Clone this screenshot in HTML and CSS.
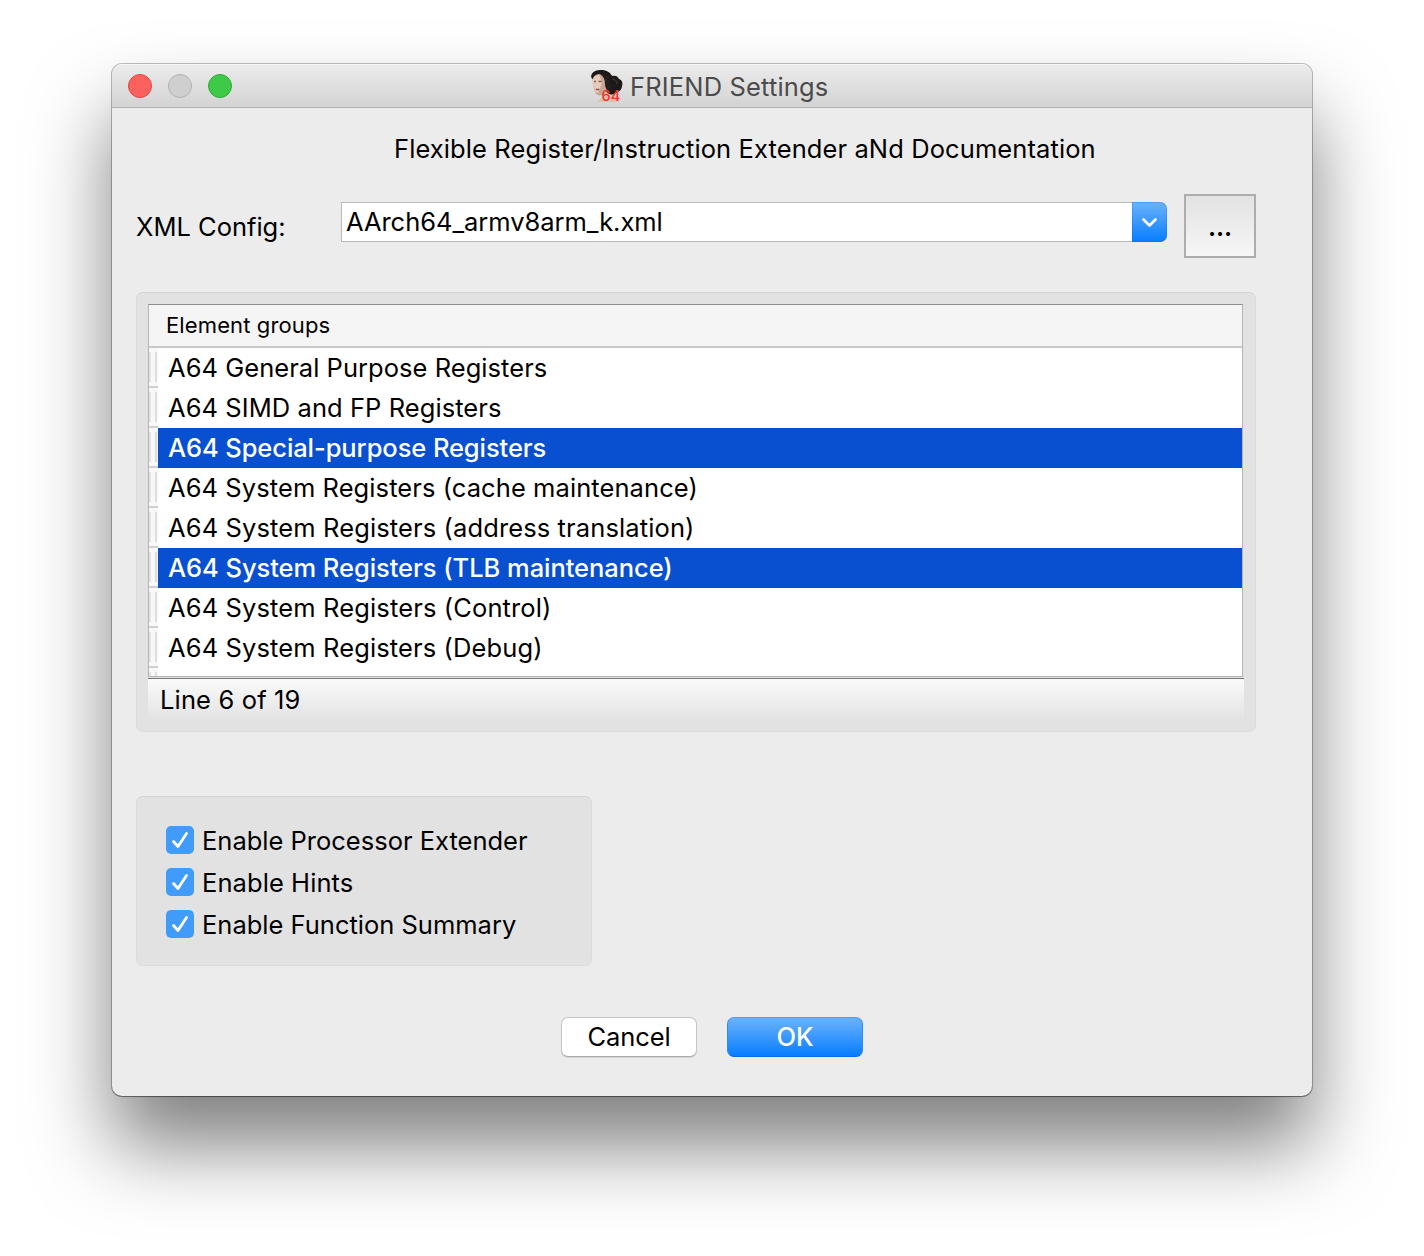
FILE: index.html
```html
<!DOCTYPE html>
<html lang="en">
<head>
<meta charset="utf-8">
<title>FRIEND Settings</title>
<link rel="stylesheet" href="styles.css">
</head>
<body>
<main class="window">
  <header class="titlebar">
    <div class="lights"><i class="light close"></i><i class="light minimize"></i><i class="light zoom"></i></div>
    <svg class="app-icon" viewBox="0 0 34 34" width="34" height="34">
      <path d="M8 33c1-2 4-3 5-5l-1-7 9-3c1 4 3 6 8 8l1 7z" fill="#dcbfae"/>
      <path d="M2.500 9C1 5 5 1 11 1c6-.5 10 2 12 6 3-1 6 0 7 3 3 1 4 4 3 7 0 3-2 5-4 6l-4 2c-3 1-6 0-8-3z" fill="#1d1918"/>
      <path d="M4 10c1-4 4-5 7-5 3 2 5 5 6 9l1 7-5 5c-3 1-6 0-7-3l-1-4c-1-3-2-6-1-9z" fill="#c9a593"/>
      <path d="M4 10c1-3 3-4 6-4 2 3 3 7 2 11l-3 7c-2 0-3-1-3-3l-1-3c-1-3-2-5-1-8z" fill="#e6cabc"/>
      <path d="M11 4c4 3 5 7 5 11 0 3 1 5 3 7l3-4-3-11z" fill="#241e1c"/>
      <path d="M5 12.500h2M9.500 12.500l3-.2M6.800 20.500h3.500" stroke="#80594c" stroke-width="1.300" fill="none"/>
      <path d="M23 10c3 0 5 2 5 5" stroke="#463a36" fill="none"/>
      <text x="12.500" y="32" class="icon-number">64</text>
    </svg>
    <h1 class="title">FRIEND Settings</h1>
  </header>
  <div class="content">
    <h2 class="heading">Flexible Register/Instruction Extender aNd Documentation</h2>
    <div class="config">
      <label class="config-label">XML Config:</label>
      <div class="combo"><span class="combo-value">AArch64_armv8arm_k.xml</span>
        <span class="combo-arrow"><svg width="35" height="40" viewBox="0 0 35 40"><path d="M11.500 17.500l6 6 6-6" fill="none" stroke="#fff" stroke-width="2.600" stroke-linecap="round" stroke-linejoin="round"/></svg></span>
      </div>
      <button class="browse">...</button>
    </div>
    <section class="panel groups">
      <div class="list">
        <div class="list-header">Element groups</div>
        <ul class="rows">
          <li class="row"><span class="r1">A64 General Purpose Registers</span></li>
          <li class="row"><span class="r2">A64 SIMD and FP Registers</span></li>
          <li class="row selected"><span class="r3">A64 Special-purpose Registers</span></li>
          <li class="row"><span class="r4">A64 System Registers (cache maintenance)</span></li>
          <li class="row"><span class="r5">A64 System Registers (address translation)</span></li>
          <li class="row selected"><span class="r6">A64 System Registers (TLB maintenance)</span></li>
          <li class="row"><span class="r7">A64 System Registers (Control)</span></li>
          <li class="row"><span class="r8">A64 System Registers (Debug)</span></li>
          <li class="row"></li>
        </ul>
      </div>
      <div class="status"><span>Line 6 of 19</span></div>
    </section>
    <section class="panel options">
      <div class="option"><svg class="check" viewBox="0 0 28 28"><path d="M7.500 15.500l4.500 5L20.500 7.500"/></svg><span class="o1">Enable Processor Extender</span></div>
      <div class="option"><svg class="check" viewBox="0 0 28 28"><path d="M7.500 15.500l4.500 5L20.500 7.500"/></svg><span class="o2">Enable Hints</span></div>
      <div class="option"><svg class="check" viewBox="0 0 28 28"><path d="M7.500 15.500l4.500 5L20.500 7.500"/></svg><span class="o3">Enable Function Summary</span></div>
    </section>
    <footer class="actions"><button class="button cancel">Cancel</button><button class="button primary">OK</button></footer>
  </div>
</main>
</body>
</html>
```
FILE: styles.css
```css
* { box-sizing: border-box; }
body { margin: 0; height: 1256px; overflow: hidden; padding: 64px 112px; background: #fff; font: 25.500px/40px Inter, "Liberation Sans", sans-serif; color: #000; }
h1, h2, ul { margin: 0; padding: 0; font: inherit; }
button { font: inherit; color: inherit; padding: 0; }
.window { width: 1200px; height: 1032px; background: #ececec; border-radius: 10px; overflow: hidden; white-space: nowrap; box-shadow: 0 0 0 1px rgba(0,0,0,.25), 0 1px 1px rgba(0,0,0,.3), 0 50px 80px rgba(0,0,0,.5); }
.titlebar { height: 44px; display: flex; border-bottom: 1px solid #b1b1b1; background: linear-gradient(#ececec, #d3d3d3); box-shadow: inset 0 1px #f6f6f6; }
.lights { display: flex; gap: 16px; padding: 10px 0 0 16px; width: 477px; }
.light { width: 24px; height: 24px; border-radius: 50%; border: 1px solid; }
.close { background: #fc625d; border-color: #e2443f; }
.minimize { background: #cfcfcf; border-color: #b1b1b1; }
.zoom { background: #3fc949; border-color: #2dac35; }
.app-icon { margin-top: 5px; flex: none; }
.icon-number { font: 500 14.500px Inter, sans-serif; fill: #ed3824; }
.title { margin-left: 7px; padding-top: 3px; color: #4b4b4b; letter-spacing: .16px; }
.content { padding: 21px 56px 0 24px; }
.heading { padding-left: 258px; height: 65px; letter-spacing: .1px; }
.config { display: flex; height: 64px; }
.config-label { width: 205px; padding-top: 13px; }
.combo { margin-top: 8px; width: 826px; height: 40px; display: flex; border: 1px solid #b9b9b9; border-right: 0; background: #fff; border-radius: 0 7px 7px 0; }
.combo-value { flex: 1; padding-left: 4px; line-height: 38px; letter-spacing: -.04px; }
.combo-arrow { width: 35px; height: 40px; margin-top: -1px; border-radius: 0 7px 7px 0; background: linear-gradient(#6cb3fa, #077dff); box-shadow: inset 0 0 0 1px rgba(0,100,240,.25); }
.combo-arrow svg { display: block; }
.browse { margin-left: 17px; width: 72px; height: 64px; border: 2px solid #adadad; background: linear-gradient(#e2e2e2, #f6f6f6); padding-top: 2px; font-weight: 600; letter-spacing: -.2px; }
.panel { background: #e2e2e2; border: 1px solid #dcdcdc; border-top-color: #d2d2d2; border-radius: 7px; }
.groups { margin-top: 34px; height: 440px; padding: 11px; }
.list { width: 1095px; height: 373px; border: 1px solid #b4b4b4; border-top-color: #8e8e8e; background: #fff; overflow: hidden; }
.list-header { height: 43px; background: #f5f5f5; border-bottom: 2px solid #c9c9c9; padding-left: 17px; font-size: 22px; line-height: 41px; letter-spacing: .12px; }
.rows { list-style: none; }
.row { height: 40px; padding-left: 19px; background: linear-gradient(#d0d0d0,#d0d0d0) 0 38px/9px 2px no-repeat, linear-gradient(90deg,#e3e3e3 2px,#f8f8f8 2px 6px,#dedede 6px 8px,#f8f8f8 8px) 0 4px/9px 30px no-repeat, linear-gradient(#f8f8f8,#f8f8f8) 0 0/9px 40px no-repeat; }
.row.selected { background-color: #0850d0; color: #fff; font-weight: 500; }
.r1 { letter-spacing: .04px; }
.r2 { letter-spacing: .07px; }
.r3 { letter-spacing: -.09px; }
.r4 { letter-spacing: .08px; }
.r5 { letter-spacing: .12px; }
.r6 { letter-spacing: -.05px; }
.r7 { letter-spacing: .13px; }
.r8 { letter-spacing: .12px; }
.status { margin-top: 1px; border-top: 1px solid #777; width: 1096px; height: 43px; padding: 1px 0 0 12px; background: linear-gradient(#fafafa, #e2e2e2); letter-spacing: .15px; }
.options { margin-top: 64px; width: 456px; height: 170px; padding: 23px 29px; }
.option { height: 42px; display: flex; gap: 8px; line-height: 42px; }
.o2 { letter-spacing: .08px; }
.check { width: 28px; height: 28px; margin-top: 6px; background: #409bfa; border-radius: 5px; fill: none; stroke: #fff; stroke-width: 2.800; stroke-linecap: round; stroke-linejoin: round; }
.actions { display: flex; gap: 30px; margin: 51px 0 0 425px; }
.button { width: 136px; height: 40px; border: 1px solid #c5c5c5; border-bottom-color: #aaa; border-radius: 7px; background: #fff; line-height: 36px; }
.cancel { letter-spacing: -.1px; box-shadow: 0 1px 1px rgba(0,0,0,.1); }
.button.primary { border-color: #4c9df5 #2b8bf8 #0869eb; background: linear-gradient(#6cb3fa, #077dff); color: #fff; font-weight: 500; }
```
